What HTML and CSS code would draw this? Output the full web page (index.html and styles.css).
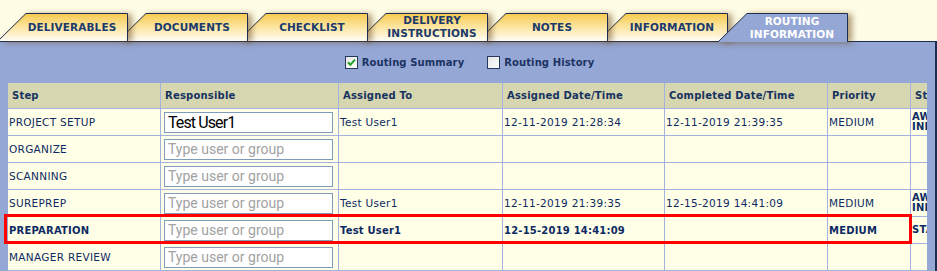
FILE: index.html
```html
<!DOCTYPE html>
<html>
<head>
<meta charset="utf-8">
<title>Routing Information</title>
<link rel="stylesheet" href="styles.css">
</head>
<body>
<div class="page">
  <div class="tabs">
    <div class="tab">
      <svg class="tab-shape" viewBox="0 0 130 28" preserveAspectRatio="none">
        <defs>
          <linearGradient id="tabfill" x1="0" y1="0" x2="0" y2="1">
            <stop offset="0" stop-color="#f8c94c"/>
            <stop offset="0.45" stop-color="#fce39a"/>
            <stop offset="1" stop-color="#fffef6"/>
          </linearGradient>
        </defs>
        <polygon class="fill" points="0,28 28,0.5 129.5,0.5 129.5,28"/>
        <polyline class="edge" points="0,28 28,0.5 129.5,0.5 129.5,28"/>
      </svg>
      <span class="tab-label">DELIVERABLES</span>
    </div>
    <div class="tab">
      <svg class="tab-shape" viewBox="0 0 130 28" preserveAspectRatio="none">
        <polygon class="fill" points="0,28 28,0.5 129.5,0.5 129.5,28"/>
        <polyline class="edge" points="0,28 28,0.5 129.5,0.5 129.5,28"/>
      </svg>
      <span class="tab-label">DOCUMENTS</span>
    </div>
    <div class="tab">
      <svg class="tab-shape" viewBox="0 0 130 28" preserveAspectRatio="none">
        <polygon class="fill" points="0,28 28,0.5 129.5,0.5 129.5,28"/>
        <polyline class="edge" points="0,28 28,0.5 129.5,0.5 129.5,28"/>
      </svg>
      <span class="tab-label">CHECKLIST</span>
    </div>
    <div class="tab">
      <svg class="tab-shape" viewBox="0 0 130 28" preserveAspectRatio="none">
        <polygon class="fill" points="0,28 28,0.5 129.5,0.5 129.5,28"/>
        <polyline class="edge" points="0,28 28,0.5 129.5,0.5 129.5,28"/>
      </svg>
      <span class="tab-label">DELIVERY<br>INSTRUCTIONS</span>
    </div>
    <div class="tab">
      <svg class="tab-shape" viewBox="0 0 130 28" preserveAspectRatio="none">
        <polygon class="fill" points="0,28 28,0.5 129.5,0.5 129.5,28"/>
        <polyline class="edge" points="0,28 28,0.5 129.5,0.5 129.5,28"/>
      </svg>
      <span class="tab-label">NOTES</span>
    </div>
    <div class="tab">
      <svg class="tab-shape" viewBox="0 0 130 28" preserveAspectRatio="none">
        <polygon class="fill" points="0,28 28,0.5 129.5,0.5 129.5,28"/>
        <polyline class="edge" points="0,28 28,0.5 129.5,0.5 129.5,28"/>
      </svg>
      <span class="tab-label">INFORMATION</span>
    </div>
    <div class="tab active">
      <svg class="tab-shape" viewBox="0 0 130 29" preserveAspectRatio="none">
        <polygon class="fill-active" points="0,29 29,0.5 129.5,0.5 129.5,29"/>
        <polyline class="edge" points="0,29 29,0.5 129.5,0.5 129.5,29"/>
      </svg>
      <span class="tab-label">ROUTING<br>INFORMATION</span>
    </div>
  </div>

  <div class="panel">
    <div class="options">
      <label class="option">
        <svg class="cb" viewBox="0 0 13 13" width="13" height="13">
          <defs>
            <linearGradient id="cbfill" x1="0" y1="0" x2="1" y2="1">
              <stop offset="0" stop-color="#e4e4e4"/>
              <stop offset="1" stop-color="#ffffff"/>
            </linearGradient>
          </defs>
          <rect x="0.5" y="0.5" width="12" height="12" fill="url(#cbfill)" stroke="#27375a"/>
          <path d="M3 6.3 L5.3 8.8 L10 3.6" fill="none" stroke="#21a321" stroke-width="2"/>
        </svg>
        <span>Routing Summary</span>
      </label>
      <label class="option">
        <svg class="cb" viewBox="0 0 13 13" width="13" height="13">
          <rect x="0.5" y="0.5" width="12" height="12" fill="url(#cbfill)" stroke="#27375a"/>
        </svg>
        <span>Routing History</span>
      </label>
    </div>

    <div class="grid-wrap">
      <table class="routing">
        <colgroup>
          <col class="c-step">
          <col class="c-resp">
          <col class="c-to">
          <col class="c-adate">
          <col class="c-cdate">
          <col class="c-prio">
          <col class="c-status">
        </colgroup>
        <thead>
          <tr>
            <th>Step</th>
            <th>Responsible</th>
            <th>Assigned To</th>
            <th>Assigned Date/Time</th>
            <th>Completed Date/Time</th>
            <th>Priority</th>
            <th>Status</th>
          </tr>
        </thead>
        <tbody>
          <tr>
            <td>PROJECT SETUP</td>
            <td class="resp"><input class="who filled" type="text" value="Test User1"></td>
            <td>Test User1</td>
            <td>12-11-2019 21:28:34</td>
            <td>12-11-2019 21:39:35</td>
            <td>MEDIUM</td>
            <td class="status">AWAITING INPUT</td>
          </tr>
          <tr>
            <td>ORGANIZE</td>
            <td class="resp"><input class="who" type="text" placeholder="Type user or group"></td>
            <td></td><td></td><td></td><td></td><td class="status"></td>
          </tr>
          <tr>
            <td>SCANNING</td>
            <td class="resp"><input class="who" type="text" placeholder="Type user or group"></td>
            <td></td><td></td><td></td><td></td><td class="status"></td>
          </tr>
          <tr>
            <td>SUREPREP</td>
            <td class="resp"><input class="who" type="text" placeholder="Type user or group"></td>
            <td>Test User1</td>
            <td>12-11-2019 21:39:35</td>
            <td>12-15-2019 14:41:09</td>
            <td>MEDIUM</td>
            <td class="status">AWAITING INPUT</td>
          </tr>
          <tr class="current">
            <td>PREPARATION</td>
            <td class="resp"><input class="who" type="text" placeholder="Type user or group"></td>
            <td>Test User1</td>
            <td>12-15-2019 14:41:09</td>
            <td></td>
            <td>MEDIUM</td>
            <td class="status">STARTED</td>
          </tr>
          <tr>
            <td>MANAGER REVIEW</td>
            <td class="resp"><input class="who" type="text" placeholder="Type user or group"></td>
            <td></td><td></td><td></td><td></td><td class="status"></td>
          </tr>
        </tbody>
      </table>
    </div>
  </div>

  <div class="highlight"></div>
</div>
</body>
</html>
```

FILE: styles.css
```css
html, body {
  margin: 0;
  padding: 0;
}

body {
  background: #fffde6;
  font-family: "DejaVu Sans", Verdana, sans-serif;
  color: #13306b;
  overflow: hidden;
}

.page {
  position: relative;
  width: 937px;
  height: 271px;
  overflow: hidden;
}

/* ---------- Tabs ---------- */
.tabs {
  position: relative;
  z-index: 2;
  display: flex;
  align-items: flex-start;
  height: 41px;
  padding-top: 13px;
  box-sizing: border-box;
  margin-left: -2px;
}

.tab {
  position: relative;
  flex: 0 0 130px;
  height: 28px;
  margin-right: -10px;
  box-sizing: border-box;
  padding: 0 9px 0 27px;
  display: flex;
  align-items: center;
  justify-content: center;
  text-align: center;
  font-weight: bold;
  font-size: 10.5px;
  line-height: 13px;
  letter-spacing: 0.1px;
  color: #1b3a6b;
}

.tab:nth-child(1) { z-index: 7; }
.tab:nth-child(2) { z-index: 6; }
.tab:nth-child(3) { z-index: 5; }
.tab:nth-child(4) { z-index: 4; }
.tab:nth-child(5) { z-index: 3; }
.tab:nth-child(6) { z-index: 2; }

.tab.active {
  z-index: 10;
  height: 29px;
  color: #ffffff;
}

.tab-shape {
  position: absolute;
  left: 0;
  top: 0;
  width: 100%;
  height: 100%;
  overflow: visible;
  filter: drop-shadow(4px 1px 3px rgba(105, 70, 20, 0.55));
}

.tab-shape .fill {
  fill: url(#tabfill);
  stroke: none;
}

.tab-shape .fill-active {
  fill: #95a7d5;
  stroke: none;
}

.tab-shape .edge {
  fill: none;
  stroke: #1d2d52;
  stroke-width: 1;
  vector-effect: non-scaling-stroke;
}

.tab-label {
  position: relative;
}

/* ---------- Panel ---------- */
.panel {
  position: relative;
  z-index: 1;
  background: #95a7d5;
  border-top: 1px solid #1d2d52;
  border-right: 2px solid #1d2d52;
  height: 230px;
  box-sizing: border-box;
}

.options {
  display: flex;
  justify-content: center;
  align-items: center;
  gap: 23px;
  height: 41px;
  padding-left: 4px;
  font-weight: bold;
  font-size: 10px;
  letter-spacing: 0.1px;
  color: #1b3363;
}

.option {
  display: flex;
  align-items: center;
  gap: 4px;
}

.cb {
  display: block;
}

/* ---------- Table ---------- */
.grid-wrap {
  margin-left: 8px;
  width: 919px;
  overflow: hidden;
}

.routing {
  border-collapse: separate;
  border-spacing: 0;
  table-layout: fixed;
  width: 993px;
  background: #ffffe8;
}

.c-step { width: 153px; }
.c-resp { width: 178px; }
.c-to { width: 164px; }
.c-adate { width: 162px; }
.c-cdate { width: 163px; }
.c-prio { width: 83px; }
.c-status { width: 90px; }

.routing th,
.routing td {
  border-right: 1px solid #a3b2df;
  border-bottom: 1px solid #a3b2df;
  vertical-align: middle;
  text-align: left;
  white-space: nowrap;
  overflow: hidden;
}

.routing thead tr {
  height: 26px;
}

.routing tbody tr {
  height: 27px;
}

.routing th {
  background: #d6d6b1;
  padding: 0 0 0 4px;
  font-size: 10px;
  font-weight: bold;
  letter-spacing: 0.2px;
  color: #17325f;
}

.routing td {
  padding: 0 0 0 1px;
  font-size: 10.5px;
  letter-spacing: 0.3px;
  color: #0d2a63;
}

.routing td.resp {
  padding-left: 3px;
}

.routing td.status {
  white-space: normal;
  font-weight: bold;
  font-size: 10px;
  line-height: 10px;
  letter-spacing: 0.2px;
}

.routing tr.current td {
  font-weight: bold;
  font-size: 10px;
  letter-spacing: 0.2px;
}

.who {
  display: block;
  width: 169px;
  height: 21px;
  box-sizing: border-box;
  margin: 0;
  padding: 0 3px;
  border: 1px solid #7f9db9;
  background: #ffffff;
  font-family: Roboto, "Liberation Sans", sans-serif;
  font-size: 14px;
  font-weight: normal;
  letter-spacing: 0;
  color: #000000;
  outline: none;
}

.who.filled {
  font-size: 16px;
  letter-spacing: -0.9px;
}

.who::placeholder {
  color: #a2a2a2;
  opacity: 1;
}

/* ---------- Highlight overlay ---------- */
.highlight {
  position: absolute;
  left: 4px;
  top: 214px;
  width: 908px;
  height: 30px;
  box-sizing: border-box;
  border: 3px solid #ff0000;
  pointer-events: none;
  z-index: 5;
}
```
